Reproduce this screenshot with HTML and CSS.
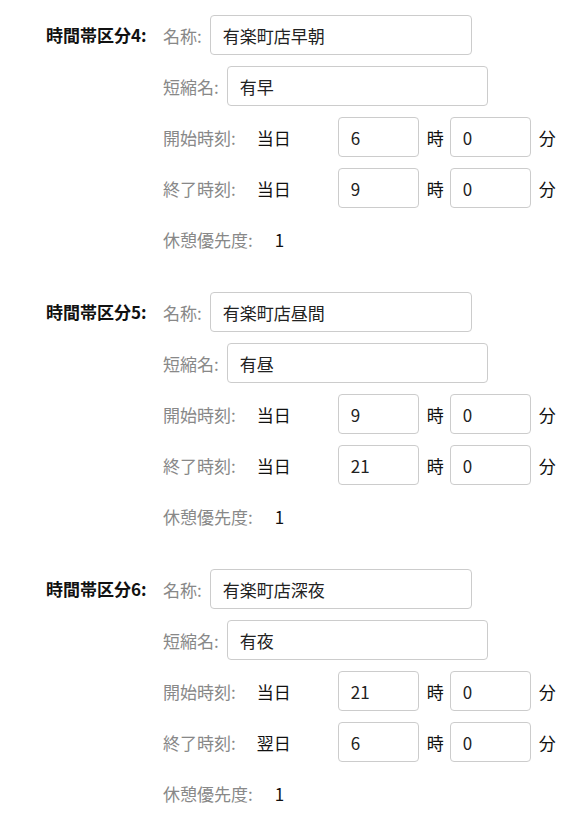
FILE: index.html
```html
<!DOCTYPE html>
<html lang="ja">
<head>
  <meta charset="UTF-8">
  <title>時間帯区分</title>
  <link rel="stylesheet" href="styles.css">
</head>
<body>
  <div class="section">
    <div class="section-title">時間帯区分4:</div>
    <div class="fields">
      <div class="row">
        <label class="label">名称:</label>
        <input type="text" class="input name-input" value="有楽町店早朝">
      </div>
      <div class="row">
        <label class="label">短縮名:</label>
        <input type="text" class="input short-input" value="有早">
      </div>
      <div class="row">
        <label class="label">開始時刻:</label>
        <span class="day">当日</span>
        <input type="text" class="input time-input" value="6">
        <span class="unit">時</span>
        <input type="text" class="input time-input" value="0">
        <span class="unit">分</span>
      </div>
      <div class="row">
        <label class="label">終了時刻:</label>
        <span class="day">当日</span>
        <input type="text" class="input time-input" value="9">
        <span class="unit">時</span>
        <input type="text" class="input time-input" value="0">
        <span class="unit">分</span>
      </div>
      <div class="row">
        <label class="label">休憩優先度:</label>
        <span class="value">1</span>
      </div>
    </div>
  </div>

  <div class="section">
    <div class="section-title">時間帯区分5:</div>
    <div class="fields">
      <div class="row">
        <label class="label">名称:</label>
        <input type="text" class="input name-input" value="有楽町店昼間">
      </div>
      <div class="row">
        <label class="label">短縮名:</label>
        <input type="text" class="input short-input" value="有昼">
      </div>
      <div class="row">
        <label class="label">開始時刻:</label>
        <span class="day">当日</span>
        <input type="text" class="input time-input" value="9">
        <span class="unit">時</span>
        <input type="text" class="input time-input" value="0">
        <span class="unit">分</span>
      </div>
      <div class="row">
        <label class="label">終了時刻:</label>
        <span class="day">当日</span>
        <input type="text" class="input time-input" value="21">
        <span class="unit">時</span>
        <input type="text" class="input time-input" value="0">
        <span class="unit">分</span>
      </div>
      <div class="row">
        <label class="label">休憩優先度:</label>
        <span class="value">1</span>
      </div>
    </div>
  </div>

  <div class="section">
    <div class="section-title">時間帯区分6:</div>
    <div class="fields">
      <div class="row">
        <label class="label">名称:</label>
        <input type="text" class="input name-input" value="有楽町店深夜">
      </div>
      <div class="row">
        <label class="label">短縮名:</label>
        <input type="text" class="input short-input" value="有夜">
      </div>
      <div class="row">
        <label class="label">開始時刻:</label>
        <span class="day">当日</span>
        <input type="text" class="input time-input" value="21">
        <span class="unit">時</span>
        <input type="text" class="input time-input" value="0">
        <span class="unit">分</span>
      </div>
      <div class="row">
        <label class="label">終了時刻:</label>
        <span class="day">翌日</span>
        <input type="text" class="input time-input" value="6">
        <span class="unit">時</span>
        <input type="text" class="input time-input" value="0">
        <span class="unit">分</span>
      </div>
      <div class="row">
        <label class="label">休憩優先度:</label>
        <span class="value">1</span>
      </div>
    </div>
  </div>
</body>
</html>
```

FILE: styles.css
```css
body {
  font-family: "Noto Sans CJK JP", "Noto Sans", sans-serif;
  font-size: 17px;
  color: #111;
  background-color: #fff;
  margin: 0;
  padding: 15px 0 0 46px;
}
.section {
  display: flex;
  margin-bottom: 22px;
}
.section-title {
  width: 117px;
  line-height: 40px;
  font-weight: bold;
  color: #111;
}
.fields {
  display: flex;
  flex-direction: column;
}
.row {
  display: flex;
  align-items: center;
  height: 40px;
  margin-bottom: 11px;
}
.label {
  color: #888;
}
.input {
  box-sizing: border-box;
  height: 40px;
  padding: 0 12px;
  border: 1px solid #ccc;
  border-radius: 4px;
  font-family: inherit;
  font-size: 17px;
  color: #222;
  background-color: #fff;
}
.name-input {
  width: 262px;
  margin-left: 8px;
}
.short-input {
  width: 261px;
  margin-left: 8px;
}
.day {
  width: 81px;
  margin-left: 21px;
}
.time-input {
  width: 81px;
}
.unit {
  margin: 0 6px 0 8px;
}
.value {
  margin-left: 22px;
}
```
